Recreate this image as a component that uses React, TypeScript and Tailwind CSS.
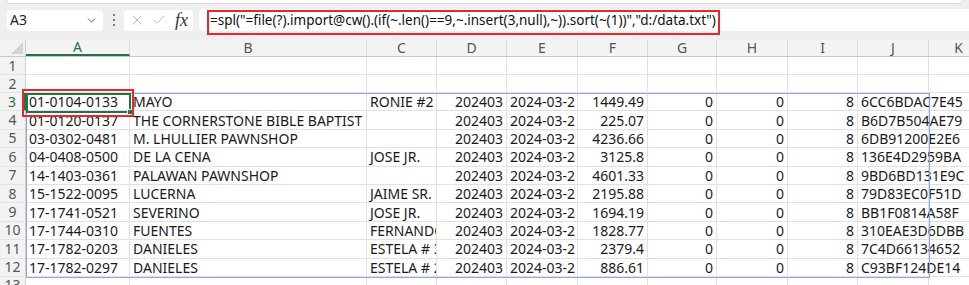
import React from "react";
import { ChevronDown, X, Check } from "lucide-react";

const colW = [104, 237, 70, 70, 71, 70, 69, 71, 70, 71, 60];
const colL = ["A", "B", "C", "D", "E", "F", "G", "H", "I", "J", "K"];
const align = ["l", "l", "l", "r", "l", "r", "r", "r", "r", "l", "l"];

const data: string[][] = [
  ["01-0104-0133", "MAYO", "RONIE #2", "202403", "2024-03-2", "1449.49", "0", "0", "8", "6CC6BDAC7E45"],
  ["01-0120-0137", "THE CORNERSTONE BIBLE BAPTIST", "", "202403", "2024-03-2", "225.07", "0", "0", "8", "B6D7B504AE79"],
  ["03-0302-0481", "M. LHULLIER PAWNSHOP", "", "202403", "2024-03-2", "4236.66", "0", "0", "8", "6DB91200E2E6"],
  ["04-0408-0500", "DE LA CENA", "JOSE JR.", "202403", "2024-03-2", "3125.8", "0", "0", "8", "136E4D2959BA"],
  ["14-1403-0361", "PALAWAN PAWNSHOP", "", "202403", "2024-03-2", "4601.33", "0", "0", "8", "9BD6BD131E9C"],
  ["15-1522-0095", "LUCERNA", "JAIME SR.", "202403", "2024-03-2", "2195.88", "0", "0", "8", "79D83EC0F51D"],
  ["17-1741-0521", "SEVERINO", "JOSE JR.", "202403", "2024-03-2", "1694.19", "0", "0", "8", "BB1F0814A58F"],
  ["17-1744-0310", "FUENTES", "FERNANDO", "202403", "2024-03-2", "1828.77", "0", "0", "8", "310EAE3D6DBB"],
  ["17-1782-0203", "DANIELES", "ESTELA # 3", "202403", "2024-03-2", "2379.4", "0", "0", "8", "7C4D66134652"],
  ["17-1782-0297", "DANIELES", "ESTELA # 2", "202403", "2024-03-2", "886.61", "0", "0", "8", "C93BF124DE14"],
];

function Row({ n, cells, h }: { n: number; cells: string[]; h: string }) {
  const sel = n === 3;
  return (
    <div className={`flex ${h}`}>
      <div
        className={`w-[26px] shrink-0 flex items-center justify-center bg-[#f3f3f3] border-b border-[#e3e3e3] ${
          sel ? "text-[#217346] border-r-2 border-r-[#217346]" : "text-[#555] border-r border-r-[#d0d0d0]"
        }`}
      >
        {n}
      </div>
      {colW.map((w, i) => {
        const t = cells[i] ?? "";
        const overflow = i === 9;
        return (
          <div
            key={i}
            style={{ width: w }}
            className={`shrink-0 flex items-center whitespace-nowrap px-[3px] pt-[1px] border-b border-r border-[#e1e1e1] text-[#1a1a1a] ${
              overflow ? "overflow-visible relative z-10" : "overflow-hidden"
            } ${align[i] === "r" ? "justify-end" : "justify-start"}`}
          >
            {t}
          </div>
        );
      })}
    </div>
  );
}

export default function App() {
  const formula =
    '=spl("=file(?).import@cw().(if(~.len()==9,~.insert(3,null),~)).sort(~(1))","d:/data.txt")';
  return (
    <div
      className="relative w-[969px] h-[285px] overflow-hidden bg-white text-[14px] leading-[18px]"
      style={{ fontFamily: '"Noto Sans", "Noto Sans CJK SC", sans-serif' }}
    >
      {/* formula bar band */}
      <div className="h-[40px] bg-[#efefef] flex flex-col">
        <div className="h-[4px] mx-[6px] bg-white border-b border-x border-[#d9d9d9] rounded-b-[4px]" />
        <div className="flex items-center h-[36px] pb-[4px]">
          <div className="ml-[7px] w-[96px] h-[21px] bg-white rounded-[4px] flex items-center justify-between pl-[3px] pr-[5px] text-[#222]">
            <span>A3</span>
            <ChevronDown size={13} strokeWidth={1.6} className="text-[#444]" />
          </div>
          <div className="w-[21px] flex flex-col items-center gap-[3px]">
            <span className="w-[2px] h-[2px] bg-[#555] rounded-full" />
            <span className="w-[2px] h-[2px] bg-[#555] rounded-full" />
            <span className="w-[2px] h-[2px] bg-[#555] rounded-full" />
          </div>
          <div className="w-[69px] h-[21px] bg-white rounded-[4px] flex items-center pl-[5px] gap-[6px]">
            <X size={16} strokeWidth={1} className="text-[#9a9a9a]" />
            <Check size={16} strokeWidth={1} className="text-[#9a9a9a]" />
            <span
              className="italic text-[18px] text-[#333] ml-[2px] leading-none"
              style={{ fontFamily: '"Liberation Serif", serif' }}
            >
              fx
            </span>
          </div>
          <div className="ml-[6px] flex-1 h-[22px] bg-white rounded-l-[4px] flex items-center pl-[11px] text-[13.5px] text-[#111] whitespace-nowrap">
            {formula}
          </div>
        </div>
      </div>

      {/* column header */}
      <div className="flex h-[17px] bg-[#f3f3f3] border-b border-[#c8c8c8]">
        <div className="w-[26px] shrink-0 border-r border-[#d0d0d0] relative">
          <svg className="absolute right-[2px] bottom-[2px]" width="12" height="12" viewBox="0 0 12 12">
            <polygon points="12,0 12,12 0,12" fill="#d4d4d4" />
          </svg>
        </div>
        {colW.map((w, i) => (
          <div
            key={i}
            style={{ width: w }}
            className={`shrink-0 flex items-center justify-center border-r border-[#dadada] ${
              i === 0 ? "text-[#217346] border-b-2 border-b-[#217346]" : "text-[#555]"
            }`}
          >
            {colL[i]}
          </div>
        ))}
      </div>

      <Row n={1} cells={[]} h="h-[18px]" />
      <Row n={2} cells={[]} h="h-[18px]" />
      {data.map((r, i) => (
        <Row key={i} n={i + 3} cells={r} h="h-[18.4px]" />
      ))}
      <Row n={13} cells={[]} h="h-[18px]" />

      {/* spill range outline */}
      <div className="absolute left-[26px] top-[93px] w-[904px] h-[184.5px] border-[1.5px] border-[#8ca8dc] pointer-events-none z-20" />
      {/* selected cell */}
      <div className="absolute left-[26px] top-[92.5px] w-[105px] h-[20px] border-2 border-[#217346] pointer-events-none z-30">
        <span className="absolute -right-[4px] -bottom-[4px] w-[6px] h-[6px] bg-[#217346] border border-white" />
      </div>
      {/* annotation boxes */}
      <div className="absolute left-[22px] top-[89px] w-[112px] h-[28px] border-2 border-[#e8262b] pointer-events-none z-40" />
      <div className="absolute left-[207px] top-[10px] w-[513px] h-[25px] border-2 border-[#e8262b] pointer-events-none z-40" />
    </div>
  );
}
